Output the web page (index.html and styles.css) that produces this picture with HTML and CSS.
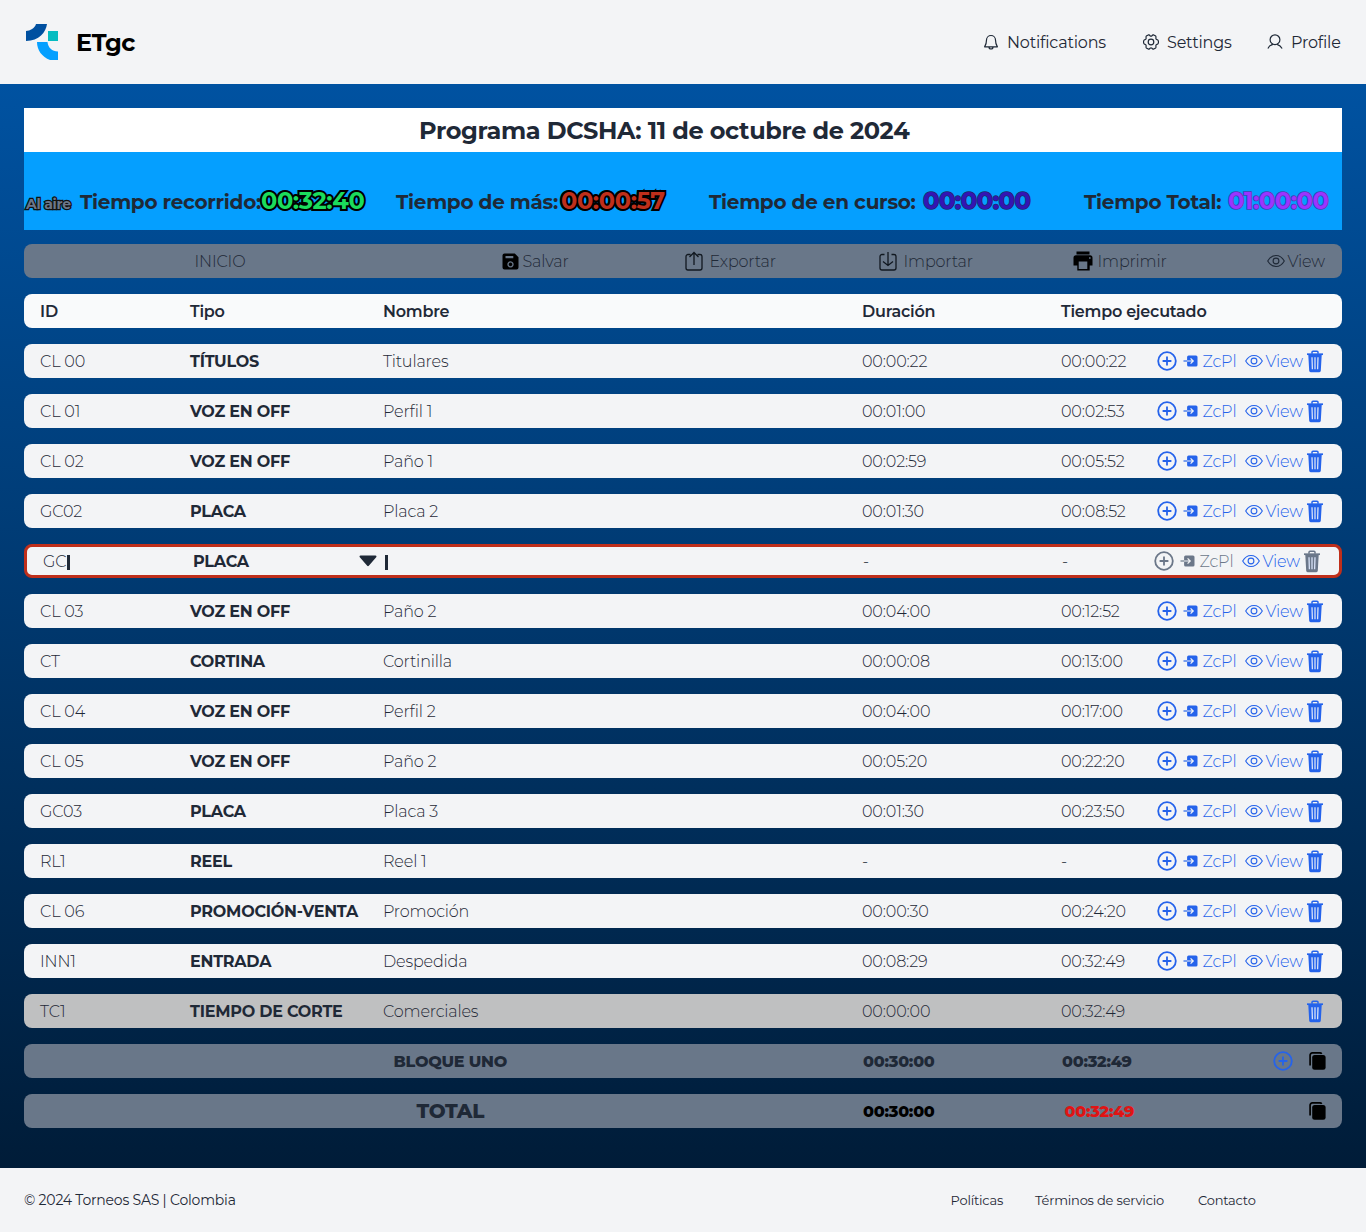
FILE: index.html
```html
<!DOCTYPE html>
<html lang="es">
<head>
<meta charset="utf-8">
<title>ETgc</title>
<link rel="stylesheet" href="styles.css">
</head>
<body>
<svg class="sprite" aria-hidden="true">
  <symbol id="plus" viewBox="0 0 20 20"><circle cx="10" cy="10" r="8.8" fill="none" stroke="currentColor" stroke-width="1.8"/><path d="M10 5.6v8.8M5.6 10h8.8" stroke="currentColor" stroke-width="1.8"/></symbol>
  <symbol id="enter" viewBox="0 0 15 12"><path fill="currentColor" fill-rule="evenodd" d="M5.600.500h7.400a1.500 1.500 0 0 1 1.500 1.500v8a1.500 1.500 0 0 1-1.500 1.500H5.600a1.500 1.500 0 0 1-1.500-1.500V6.600h4.700L7.200 8.300l.8.8L11.100 6 8 2.900l-.8.8L8.800 5.400H4.100V2a1.500 1.500 0 0 1 1.500-1.500z"/><path d="M.500 6h3.600" stroke="currentColor" stroke-width="1.200"/></symbol>
  <symbol id="eye" viewBox="0 0 18 14"><path d="M.7 7C2.700 3.500 5.600 1.500 9 1.500S15.300 3.500 17.300 7C15.300 10.500 12.400 12.500 9 12.500S2.700 10.500.7 7z" fill="none" stroke="currentColor" stroke-width="1.100"/><circle cx="9" cy="7" r="2.900" fill="none" stroke="currentColor" stroke-width="1.100"/></symbol>
  <symbol id="trash" viewBox="0 0 18 23"><path d="M6 3.800V2.200a1 1 0 0 1 1-1h4a1 1 0 0 1 1 1v1.600" fill="none" stroke="currentColor" stroke-width="1.500"/><path d="M1 4.200h16" stroke="currentColor" stroke-width="1.700"/><path fill="currentColor" d="M2.300 5h13.400l-.9 15.800a1.500 1.500 0 0 1-1.500 1.400H4.700a1.500 1.500 0 0 1-1.500-1.400z"/><path class="slats" d="M6 7.200l.4 12M9 7.200v12M12 7.200l-.4 12" stroke-width="1.300" fill="none"/></symbol>
  <symbol id="copy" viewBox="0 0 17 18"><path d="M1.100 13.500V3.100a2.200 2.200 0 0 1 2.200-2.200H11a2 2 0 0 1 1.700 1" fill="none" stroke="#000" stroke-width="1.700"/><rect x="3.200" y="2.900" width="13.400" height="14.900" rx="2.500" fill="#000"/></symbol>
</svg>

<header class="topbar">
  <svg class="logo" viewBox="0 0 32 36"><path fill="#0050a0" d="M10 0H21C20 8 13 17 0 17V7C4 7 9 4 10 0z"/><path fill="#06bcc1" d="M22 7h10v10H22z"/><path fill="#05a0ff" d="M11 18H21.500C22 23.500 26 27.500 32 27.500V36H24C16 33 11 26 11 18z"/></svg>
  <span class="brand">ETgc</span>
  <nav class="nav">
    <a class="nav-item nav-bell"><svg viewBox="0 0 16 16"><path d="M3.500 6a4.500 4.500 0 0 1 9 0c0 3.500.9 5.300 1.900 6.800H1.600C2.600 11.300 3.500 9.500 3.500 6zM6 13a2 2 0 0 0 4 0" fill="none" stroke="currentColor" stroke-width="1.200" stroke-linejoin="round"/></svg><span>Notifications</span></a>
    <a class="nav-item nav-gear"><svg viewBox="0 0 16 16"><path d="M5.300.9Q6.600.7 7 1.700Q8 2.500 9 1.700Q9.400.7 10.700.9L12.700 2.100Q13.400 3 12.800 4Q12.800 5.300 14 5.600Q15.200 5.900 15.400 7V9Q15.200 10.100 14 10.400Q12.800 10.700 12.800 12Q13.400 13 12.700 13.900L10.700 15.100Q9.400 15.300 9 14.300Q8 13.500 7 14.300Q6.600 15.300 5.300 15.100L3.300 13.900Q2.600 13 3.200 12Q3.200 10.700 2 10.400Q.8 10.100.6 9V7Q.8 5.900 2 5.600Q3.200 5.300 3.200 4Q2.600 3 3.300 2.100z" fill="none" stroke="currentColor" stroke-width="1.200" stroke-linejoin="round"/><circle cx="8" cy="8" r="2.800" fill="none" stroke="currentColor" stroke-width="1.200"/></svg><span>Settings</span></a>
    <a class="nav-item nav-user"><svg viewBox="0 0 16 16"><circle cx="8" cy="5.700" r="4.900" fill="none" stroke="currentColor" stroke-width="1.200"/><path d="M.9 14.500c1-2 2.900-3.500 5-4.100M15.100 14.500c-1-2-2.900-3.500-5-4.100" fill="none" stroke="currentColor" stroke-width="1.200"/></svg><span>Profile</span></a>
  </nav>
</header>

<main class="board">
  <h1 class="title"><span>Programa DCSHA: 11 de octubre de 2024</span></h1>
  <section class="clocks">
    <span class="air">Al aire</span>
    <div class="clock"><b class="l1">Tiempo recorrido:</b><span class="time green">00:32:40</span></div>
    <div class="clock"><b class="l2">Tiempo de más:</b><span class="time red">00:00:57</span></div>
    <div class="clock"><b class="l3">Tiempo de en curso:</b><span class="time indigo">00:00:00</span></div>
    <div class="clock"><b class="l4">Tiempo Total:</b><span class="time violet">01:00:00</span></div>
  </section>

  <section class="row tools">
    <div class="tool"><span>INICIO</span></div>
    <div class="tool"><svg class="i-save" viewBox="0 0 17 17"><path fill="#000" fill-rule="evenodd" d="M2.500.500h10.300l3.700 3.700v10.300a2 2 0 0 1-2 2h-12a2 2 0 0 1-2-2v-12a2 2 0 0 1 2-2zM3.500 3v2.300h7.800V3zM8.500 8.300a3.100 3.100 0 1 0 .01 0zM8.500 9.600a1.800 1.800 0 1 1-.01 0z"/></svg><span>Salvar</span></div>
    <div class="tool"><svg class="i-port" viewBox="0 0 18 20"><path d="M5.500 3.500H3a2 2 0 0 0-2 2V17a2 2 0 0 0 2 2h12a2 2 0 0 0 2-2V5.500a2 2 0 0 0-2-2h-2.500M9 14V1.500M4.500 6L9 1.500 13.500 6" fill="none" stroke="#111820" stroke-width="1.300"/></svg><span>Exportar</span></div>
    <div class="tool"><svg class="i-port" viewBox="0 0 18 20"><path d="M5.500 3.500H3a2 2 0 0 0-2 2V17a2 2 0 0 0 2 2h12a2 2 0 0 0 2-2V5.500a2 2 0 0 0-2-2h-2.500M9 1v13.500M4 10.500l5 4 5-4" fill="none" stroke="#111820" stroke-width="1.300"/></svg><span>Importar</span></div>
    <div class="tool"><svg class="i-print" viewBox="0 0 20 20"><path fill="#000" fill-rule="evenodd" d="M3.500.500h13v3h-13zM3 4.300h14a2.500 2.500 0 0 1 2.500 2.500v7.700H16.700V19.500H4.300v-5H.500V6.800A2.500 2.500 0 0 1 3 4.300zM5.700 10.500v7.500h8.600v-7.500zM16 6.200v1.600h1.600V6.200z"/></svg><span>Imprimir</span></div>
    <div class="tool"><svg class="i-eye"><use href="#eye"/></svg><span>View</span></div>
  </section>

  <section class="row head"><span>ID</span><span>Tipo</span><span>Nombre</span><span>Duración</span><span>Tiempo ejecutado</span></section>

  <section class="row"><span>CL 00</span><b>TÍTULOS</b><span>Titulares</span><time>00:00:22</time><time>00:00:22</time><div class="acts"><svg class="i-plus"><use href="#plus"/></svg><svg class="i-enter"><use href="#enter"/></svg><a class="zc">ZcPl</a><svg class="i-eye"><use href="#eye"/></svg><a class="view">View</a><svg class="i-trash"><use href="#trash"/></svg></div></section>
  <section class="row"><span>CL 01</span><b>VOZ EN OFF</b><span>Perfil 1</span><time>00:01:00</time><time>00:02:53</time><div class="acts"><svg class="i-plus"><use href="#plus"/></svg><svg class="i-enter"><use href="#enter"/></svg><a class="zc">ZcPl</a><svg class="i-eye"><use href="#eye"/></svg><a class="view">View</a><svg class="i-trash"><use href="#trash"/></svg></div></section>
  <section class="row"><span>CL 02</span><b>VOZ EN OFF</b><span>Paño 1</span><time>00:02:59</time><time>00:05:52</time><div class="acts"><svg class="i-plus"><use href="#plus"/></svg><svg class="i-enter"><use href="#enter"/></svg><a class="zc">ZcPl</a><svg class="i-eye"><use href="#eye"/></svg><a class="view">View</a><svg class="i-trash"><use href="#trash"/></svg></div></section>
  <section class="row"><span>GC02</span><b>PLACA</b><span>Placa 2</span><time>00:01:30</time><time>00:08:52</time><div class="acts"><svg class="i-plus"><use href="#plus"/></svg><svg class="i-enter"><use href="#enter"/></svg><a class="zc">ZcPl</a><svg class="i-eye"><use href="#eye"/></svg><a class="view">View</a><svg class="i-trash"><use href="#trash"/></svg></div></section>
  <section class="row editing"><span>GC<i class="caret"></i></span><b>PLACA<svg class="i-drop" viewBox="0 0 18 12"><path fill="currentColor" d="M1.500.500h15a1 1 0 0 1 .7 1.700L9.800 10.800a1.100 1.100 0 0 1-1.600 0L.8 2.200A1 1 0 0 1 1.500.500z"/></svg></b><span><i class="caret"></i></span><time>-</time><time>-</time><div class="acts"><svg class="i-plus"><use href="#plus"/></svg><svg class="i-enter"><use href="#enter"/></svg><a class="zc">ZcPl</a><svg class="i-eye"><use href="#eye"/></svg><a class="view">View</a><svg class="i-trash"><use href="#trash"/></svg></div></section>
  <section class="row"><span>CL 03</span><b>VOZ EN OFF</b><span>Paño 2</span><time>00:04:00</time><time>00:12:52</time><div class="acts"><svg class="i-plus"><use href="#plus"/></svg><svg class="i-enter"><use href="#enter"/></svg><a class="zc">ZcPl</a><svg class="i-eye"><use href="#eye"/></svg><a class="view">View</a><svg class="i-trash"><use href="#trash"/></svg></div></section>
  <section class="row"><span>CT</span><b>CORTINA</b><span>Cortinilla</span><time>00:00:08</time><time>00:13:00</time><div class="acts"><svg class="i-plus"><use href="#plus"/></svg><svg class="i-enter"><use href="#enter"/></svg><a class="zc">ZcPl</a><svg class="i-eye"><use href="#eye"/></svg><a class="view">View</a><svg class="i-trash"><use href="#trash"/></svg></div></section>
  <section class="row"><span>CL 04</span><b>VOZ EN OFF</b><span>Perfil 2</span><time>00:04:00</time><time>00:17:00</time><div class="acts"><svg class="i-plus"><use href="#plus"/></svg><svg class="i-enter"><use href="#enter"/></svg><a class="zc">ZcPl</a><svg class="i-eye"><use href="#eye"/></svg><a class="view">View</a><svg class="i-trash"><use href="#trash"/></svg></div></section>
  <section class="row"><span>CL 05</span><b>VOZ EN OFF</b><span>Paño 2</span><time>00:05:20</time><time>00:22:20</time><div class="acts"><svg class="i-plus"><use href="#plus"/></svg><svg class="i-enter"><use href="#enter"/></svg><a class="zc">ZcPl</a><svg class="i-eye"><use href="#eye"/></svg><a class="view">View</a><svg class="i-trash"><use href="#trash"/></svg></div></section>
  <section class="row"><span>GC03</span><b>PLACA</b><span>Placa 3</span><time>00:01:30</time><time>00:23:50</time><div class="acts"><svg class="i-plus"><use href="#plus"/></svg><svg class="i-enter"><use href="#enter"/></svg><a class="zc">ZcPl</a><svg class="i-eye"><use href="#eye"/></svg><a class="view">View</a><svg class="i-trash"><use href="#trash"/></svg></div></section>
  <section class="row"><span>RL1</span><b>REEL</b><span>Reel 1</span><time>-</time><time>-</time><div class="acts"><svg class="i-plus"><use href="#plus"/></svg><svg class="i-enter"><use href="#enter"/></svg><a class="zc">ZcPl</a><svg class="i-eye"><use href="#eye"/></svg><a class="view">View</a><svg class="i-trash"><use href="#trash"/></svg></div></section>
  <section class="row"><span>CL 06</span><b>PROMOCIÓN-VENTA</b><span>Promoción</span><time>00:00:30</time><time>00:24:20</time><div class="acts"><svg class="i-plus"><use href="#plus"/></svg><svg class="i-enter"><use href="#enter"/></svg><a class="zc">ZcPl</a><svg class="i-eye"><use href="#eye"/></svg><a class="view">View</a><svg class="i-trash"><use href="#trash"/></svg></div></section>
  <section class="row"><span>INN1</span><b>ENTRADA</b><span>Despedida</span><time>00:08:29</time><time>00:32:49</time><div class="acts"><svg class="i-plus"><use href="#plus"/></svg><svg class="i-enter"><use href="#enter"/></svg><a class="zc">ZcPl</a><svg class="i-eye"><use href="#eye"/></svg><a class="view">View</a><svg class="i-trash"><use href="#trash"/></svg></div></section>
  <section class="row cut"><span>TC1</span><b>TIEMPO DE CORTE</b><span>Comerciales</span><time>00:00:00</time><time>00:32:49</time><div class="acts"><svg class="i-trash"><use href="#trash"/></svg></div></section>
  <section class="row sum"><strong>BLOQUE UNO</strong><time>00:30:00</time><time>00:32:49</time><div class="acts"><svg class="i-plus"><use href="#plus"/></svg><svg class="i-copy"><use href="#copy"/></svg></div></section>
  <section class="row sum total"><strong>TOTAL</strong><time>00:30:00</time><time class="over">00:32:49</time><div class="acts"><svg class="i-copy"><use href="#copy"/></svg></div></section>
</main>

<footer class="footer">
  <span class="legal">© 2024 Torneos SAS | Colombia</span>
  <nav class="links"><a>Políticas</a><a>Términos de servicio</a><a>Contacto</a></nav>
</footer>
</body>
</html>
```
FILE: styles.css
```css
* { box-sizing: border-box; }
body {
  margin: 0;
  min-height: 1232px;
  display: flex;
  flex-direction: column;
  font-family: Montserrat, Inter, "Open Sans", sans-serif;
  font-size: 16px;
  line-height: 24px;
  color: #1f2937;
  background: #f3f4f6;
  white-space: nowrap;
}
svg { display: block; flex: none; }
.sprite { width: 0; height: 0; position: absolute; }

.topbar { height: 84px; display: flex; align-items: center; padding: 0 25px 0 26px; }
.logo { width: 32px; height: 36px; }
.brand { margin-left: 18px; padding-top: 2px; font-size: 24px; font-weight: 700; letter-spacing: -0.36px; color: #000; }
.nav { margin-left: auto; display: flex; letter-spacing: -0.2px; }
.nav-item { display: flex; align-items: center; gap: 8px; }
.nav-item svg { width: 16px; height: 16px; }
.nav-item span { padding-top: 2px; }
.nav-bell { width: 160px; }
.nav-gear { width: 124px; }
.nav-user { width: 74px; }

.board {
  height: 1084px;
  padding: 24px 24px 0;
  display: flex;
  flex-direction: column;
  background: linear-gradient(#0052a1, #001c38);
}
.title { margin: 0; height: 44px; padding-left: 395px; background: #fff; font-size: 24px; line-height: 45px; font-weight: 700; letter-spacing: -0.36px; }
.clocks {
  height: 78px;
  padding: 22px 0 0 2px;
  margin-bottom: 14px;
  display: grid;
  grid-template-columns: 54px 316px 313px 375px 1fr;
  align-items: baseline;
  background: #059fff;
}
.air { font-size: 14px; font-weight: 700; letter-spacing: -0.24px; color: #6b7789; -webkit-text-stroke: 2.5px #111; paint-order: stroke fill; }
.clock { display: flex; align-items: baseline; font-size: 20px; line-height: 54px; letter-spacing: -0.28px; }
.time { font-size: 24px; font-weight: 700; letter-spacing: -0.36px; paint-order: stroke fill; }
.l1 { width: 181px; }
.l2 { width: 165px; }
.l3 { width: 214px; }
.l4 { width: 144px; }
.green { color: #1bdc5c; -webkit-text-stroke: 4px #000; }
.red { color: #bf2f1b; -webkit-text-stroke: 4px #000; }
.indigo { color: #3414b4; -webkit-text-stroke: 1.5px #1e2a6b; }
.violet { color: #9b34ff; -webkit-text-stroke: 1.5px #4a3bb0; }

.row {
  height: 34px;
  flex: none;
  margin-bottom: 16px;
  padding: 0 16px;
  border-radius: 8px;
  display: grid;
  grid-template-columns: 150px 193px 479px 199px 96px 1fr;
  align-items: center;
  background: #f3f4f6;
  font-weight: 350;
  letter-spacing: -0.16px;
}
.row span, .row b, .row time, .row a, .sum strong { padding-top: 2px; }
.row b { font-weight: 700; letter-spacing: -0.24px; }
.head { background: #f9fafb; font-weight: 600; letter-spacing: -0.22px; }
.tools { background: #697789; padding-left: 170.5px; grid-template-columns: 307px 183px 194px 194px 194px 1fr; }
.tool { display: flex; align-items: center; }
.i-save { width: 17px; height: 17px; margin-right: 4px; }
.i-port { width: 18px; height: 20px; margin-right: 7px; }
.i-print { width: 20px; height: 20px; margin-right: 5px; }
.i-eye { width: 18px; height: 14px; }
.tool .i-eye { margin-right: 3px; }

.acts { display: flex; align-items: center; color: #2563eb; }
.i-plus { width: 20px; height: 20px; margin: 0 6px 1px 0; }
.i-enter { width: 15px; height: 12px; margin-right: 4.5px; }
.zc { width: 42px; }
.acts .i-eye { margin-right: 3px; }
.view { width: 40.5px; }
.i-trash { width: 18px; height: 23px; }
.slats { stroke: #d8e2f8; }
.i-copy { width: 17px; height: 18px; }

.editing { border: 3px solid #bf2f1b; grid-template-columns: 150px 191px 479px 199px 93px 1fr; }
.editing .acts { color: #6b7789; margin-left: -1px; }
.editing .i-eye, .editing .view { color: #2563eb; }
.editing b { display: flex; align-items: center; justify-content: space-between; padding-right: 7px; }
.caret { display: inline-block; width: 3px; height: 15px; margin-left: 1px; background: #1f2937; vertical-align: -2.5px; }
.i-drop { width: 18px; height: 12px; margin-bottom: 2px; }

.cut { background: #bfc0c1; }
.cut .acts { justify-content: flex-end; padding-right: 2px; }
.sum { background: #697789; font-weight: 800; letter-spacing: -0.24px; grid-template-columns: 823px 199px 95px 1fr; }
.sum strong { font-weight: 800; padding-left: 353.5px; }
.sum .acts { justify-content: flex-end; padding-right: 0.5px; }
.sum .i-plus { margin-right: 16px; }
.total strong { font-size: 20px; padding-left: 376.5px; padding-top: 0; letter-spacing: -0.3px; }
.total time { color: #000; }
.total .over { color: #e01414; padding-left: 2.5px; }

.footer { height: 64px; display: flex; align-items: center; padding: 0 24px; font-size: 14px; letter-spacing: -0.2px; }
.links { margin-left: auto; display: grid; grid-template-columns: 84.5px 163px 144px; font-size: 13px; letter-spacing: -0.19px; }
```
